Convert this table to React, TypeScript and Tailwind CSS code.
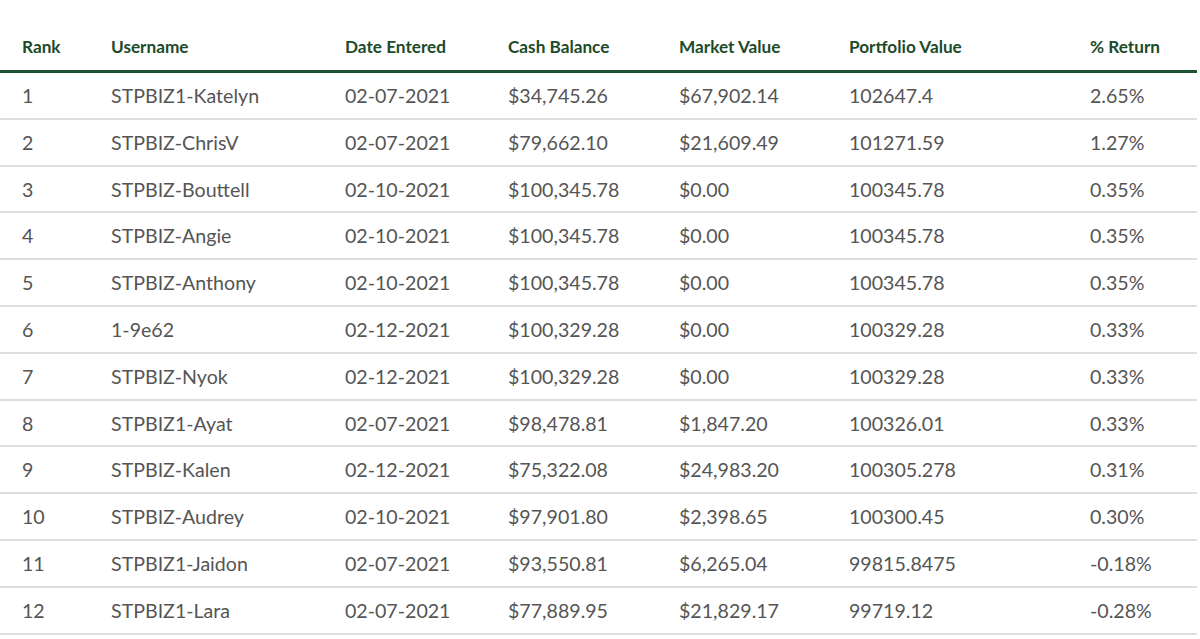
const rows = [
  ['1', 'STPBIZ1-Katelyn', '02-07-2021', '$34,745.26', '$67,902.14', '102647.4', '2.65%'],
  ['2', 'STPBIZ-ChrisV', '02-07-2021', '$79,662.10', '$21,609.49', '101271.59', '1.27%'],
  ['3', 'STPBIZ-Bouttell', '02-10-2021', '$100,345.78', '$0.00', '100345.78', '0.35%'],
  ['4', 'STPBIZ-Angie', '02-10-2021', '$100,345.78', '$0.00', '100345.78', '0.35%'],
  ['5', 'STPBIZ-Anthony', '02-10-2021', '$100,345.78', '$0.00', '100345.78', '0.35%'],
  ['6', '1-9e62', '02-12-2021', '$100,329.28', '$0.00', '100329.28', '0.33%'],
  ['7', 'STPBIZ-Nyok', '02-12-2021', '$100,329.28', '$0.00', '100329.28', '0.33%'],
  ['8', 'STPBIZ1-Ayat', '02-07-2021', '$98,478.81', '$1,847.20', '100326.01', '0.33%'],
  ['9', 'STPBIZ-Kalen', '02-12-2021', '$75,322.08', '$24,983.20', '100305.278', '0.31%'],
  ['10', 'STPBIZ-Audrey', '02-10-2021', '$97,901.80', '$2,398.65', '100300.45', '0.30%'],
  ['11', 'STPBIZ1-Jaidon', '02-07-2021', '$93,550.81', '$6,265.04', '99815.8475', '-0.18%'],
  ['12', 'STPBIZ1-Lara', '02-07-2021', '$77,889.95', '$21,829.17', '99719.12', '-0.28%'],
];

const headers = ['Rank', 'Username', 'Date Entered', 'Cash Balance', 'Market Value', 'Portfolio Value', '% Return'];
const widths = ['w-[89px]', 'w-[234px]', 'w-[163px]', 'w-[171px]', 'w-[170px]', 'w-[241px]', 'w-[129px]'];

export default function App() {
  return (
    <div className="min-h-screen bg-white" style={{ fontFamily: 'Lato, "Open Sans", sans-serif' }}>
      <table className="w-[1197px] table-fixed border-collapse text-left">
        <colgroup>
          {widths.map((w, i) => (
            <col key={i} className={w} />
          ))}
        </colgroup>
        <thead>
          <tr className="border-b-[3px] border-[#1d5232]">
            {headers.map((h) => (
              <th key={h} className="pl-[22px] pt-[36px] pb-[12px] text-[17.2px] font-bold leading-[22px] text-[#1c4a2a]">
                {h}
              </th>
            ))}
          </tr>
        </thead>
        <tbody>
          {rows.map((r) => (
            <tr key={r[0]} className="border-b-2 border-[#dedede]">
              {r.map((c, i) => (
                <td key={i} className="pl-[22px] pt-[12px] pb-[10px] text-[19.6px] leading-[22.8px] text-[#555]">
                  {c}
                </td>
              ))}
            </tr>
          ))}
        </tbody>
      </table>
    </div>
  );
}
